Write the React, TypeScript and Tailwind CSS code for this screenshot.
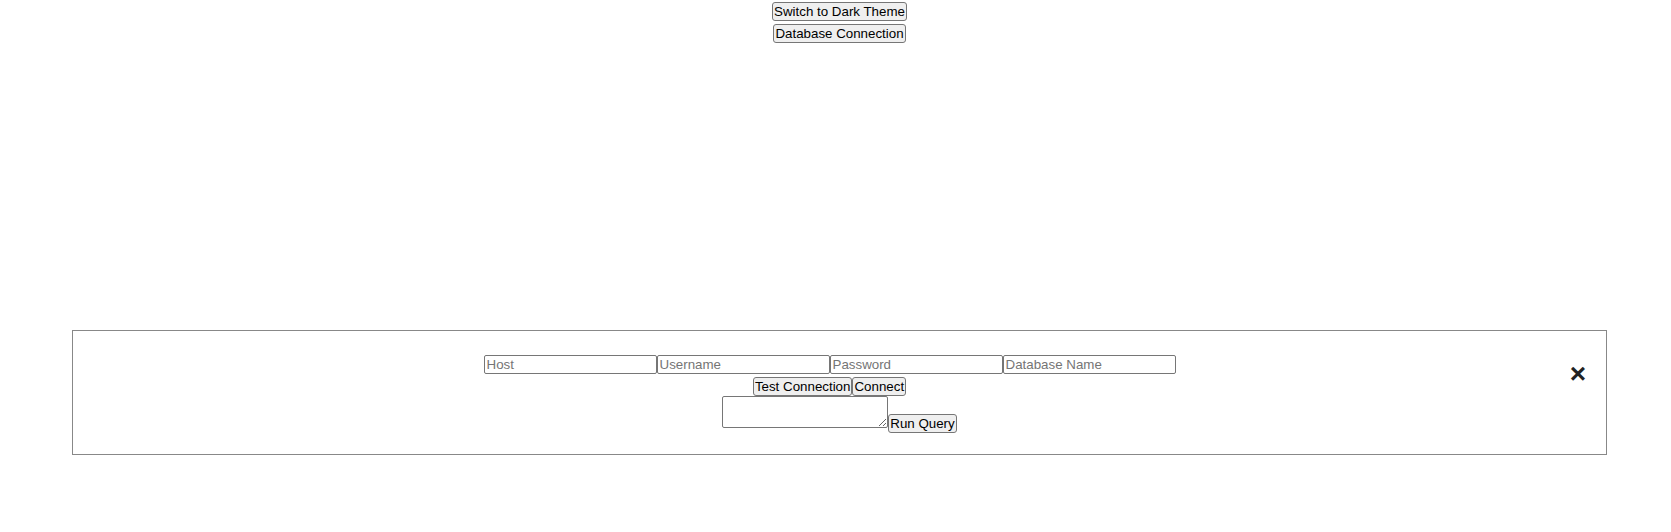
import { useState } from "react";

const btn =
  "px-[1px] py-[1px] border border-[#767676] rounded-[3px] bg-[#efefef] text-[13.333px] leading-[normal] text-black hover:bg-[#e5e5e5]";

const field =
  "w-[173px] h-[19px] px-[2px] border border-[#767676] rounded-[2px] bg-white text-[13.333px] leading-[normal] text-black placeholder:text-[#757575] outline-none";

const App = () => {
  const [dark, setDark] = useState(false);
  const [open, setOpen] = useState(true);
  const [query, setQuery] = useState("");

  return (
    <div className="min-h-[532px] bg-white pl-2 font-['Liberation_Sans',Arial,sans-serif] text-black">
      <div className="flex flex-col items-center gap-[3px] pt-[2px]">
        <button className={btn} onClick={() => setDark(!dark)}>
          {dark ? "Switch to Light Theme" : "Switch to Dark Theme"}
        </button>
        <button className={btn} onClick={() => setOpen(true)}>
          Database Connection
        </button>
      </div>

      {open && (
        <div className="mx-16 mt-[287px] border border-[#888] px-5 pt-5 pb-[21px]">
          <div className="flex">
            <div className="flex flex-1 flex-col items-center">
              <div className="mt-[4px] flex">
                <input className={field} placeholder="Host" />
                <input className={field} placeholder="Username" />
                <input className={field} type="password" placeholder="Password" />
                <input className={field} placeholder="Database Name" />
              </div>
              <div className="mt-[3px] flex">
                <button className={btn}>Test Connection</button>
                <button className={btn}>Connect</button>
              </div>
            </div>
            <span
              className="mt-[7px] w-5 cursor-pointer text-right text-[28px] font-bold leading-[32px] text-[#222]"
              onClick={() => setOpen(false)}
            >
              ×
            </span>
          </div>
          <div className="flex items-start justify-center">
            <textarea
              className="h-[32px] w-[166px] border border-[#767676] rounded-[2px] px-[2px] font-['Liberation_Mono',monospace] text-[13.333px] outline-none"
              value={query}
              onChange={(e) => setQuery(e.target.value)}
            />
            <button className={`${btn} mt-[18px]`}>Run Query</button>
          </div>
        </div>
      )}
    </div>
  );
};

export default App;
